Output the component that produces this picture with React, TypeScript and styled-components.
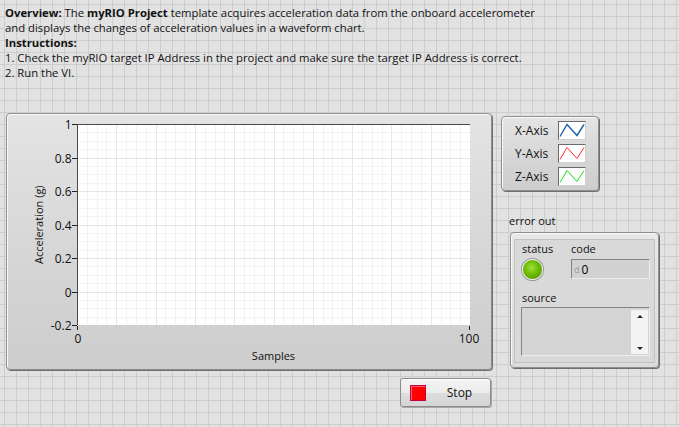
import React from "react";
import styled, { createGlobalStyle } from "styled-components";

const Global = createGlobalStyle`
  html, body { margin: 0; padding: 0; }
  body {
    width: 679px;
    height: 427px;
    overflow: hidden;
    font-family: "Open Sans", "Noto Sans", sans-serif;
    font-size: 11px;
    color: #111;
    background-color: #e2e2e2;
    background-image:
      linear-gradient(to right, #cdcdcd 1px, transparent 1px),
      linear-gradient(to bottom, #cdcdcd 1px, transparent 1px);
    background-size: 12px 12px;
    background-position: 4px 4px;
  }
`;

const Page = styled.div`
  box-sizing: border-box;
  width: 679px;
  height: 427px;
  padding: 5px 0 0 5px;
  display: flex;
  flex-direction: column;
`;

const Intro = styled.div`
  font-size: 11.3px;
  line-height: 15px;
  white-space: nowrap;
  b { font-weight: 700; }
`;

const Line = styled.div``;

const MainRow = styled.div`
  display: flex;
  margin-top: 33px;
`;

const LeftCol = styled.div`
  display: flex;
  flex-direction: column;
  margin-left: 1px;
`;

const Panel = styled.div`
  box-sizing: border-box;
  border: 1px solid #8e8e8e;
  border-radius: 4px;
  background: linear-gradient(to bottom, #e4e4e4 0%, #d6d6d6 55%, #cdcdcd 100%);
  box-shadow: inset 1px 1px 0 #fafafa, 1px 1px 0 #6e6e6e;
`;

const ChartPanel = styled(Panel)`
  width: 486px;
  height: 257px;
  display: flex;
  align-items: flex-start;
`;

const YTitle = styled.div`
  margin: 10px 0 0 25px;
  width: 14px;
  height: 201px;
  display: flex;
  align-items: center;
  justify-content: center;
  writing-mode: vertical-rl;
  transform: rotate(180deg);
  line-height: 14px;
  white-space: nowrap;
`;

const ChartCol = styled.div`
  display: flex;
  flex-direction: column;
`;

const XTitle = styled.div`
  margin-left: 31px;
  width: 393px;
  text-align: center;
  line-height: 15px;
`;

const StopRow = styled.div`
  display: flex;
  justify-content: flex-end;
  margin-top: 8px;
  margin-right: 1px;
`;

const StopButton = styled.button`
  box-sizing: border-box;
  width: 91px;
  height: 29px;
  padding: 0 0 0 9px;
  display: flex;
  align-items: center;
  border: 1px solid #8a8a8a;
  border-radius: 3px;
  background: linear-gradient(to bottom, #f4f4f4 0%, #ececec 50%, #dcdcdc 51%, #d6d6d6 100%);
  box-shadow: inset 0 1px 0 #ffffff, 1px 1px 0 #a8a8a8;
  font-family: "Open Sans", sans-serif;
  font-size: 12px;
  color: #111;
`;

const RedLamp = styled.span`
  box-sizing: border-box;
  width: 16px;
  height: 16px;
  background: #ff0000;
  border: 1px solid #c8003a;
  box-shadow: inset 1px 1px 0 #ff5a78;
`;

const StopLabel = styled.span`
  flex: 1;
  text-align: center;
  padding-left: 3px;
`;

const RightCol = styled.div`
  display: flex;
  flex-direction: column;
  margin-left: 9px;
`;

const LegendPanel = styled(Panel)`
  margin-top: 3px;
  width: 98px;
  height: 75px;
  padding: 4px 12px 0 13px;
  display: flex;
  flex-direction: column;
  gap: 4px;
`;

const LegendRow = styled.div`
  height: 19px;
  display: flex;
  align-items: center;
  justify-content: space-between;
  font-size: 12px;
`;

const Swatch = styled.svg`
  box-sizing: border-box;
  width: 28px;
  height: 19px;
  background: #fff;
  border-top: 1px solid #6a6a6a;
  border-left: 1px solid #6a6a6a;
  border-right: 1px solid #d0d0d0;
  border-bottom: 1px solid #d0d0d0;
`;

const ErrorLabel = styled.div`
  margin: 22px 0 0 8px;
  line-height: 15px;
`;

const Cluster = styled(Panel)`
  margin: 4px 0 0 9px;
  width: 149px;
  height: 136px;
  padding: 6px 3px 0 3px;
  background: linear-gradient(to bottom, #e8e8e8 0%, #dcdcdc 100%);
`;

const ClusterInner = styled.div`
  box-sizing: border-box;
  height: 124px;
  border: 1px solid #c2c2c2;
  background: #d9d9d9;
  padding: 1px 0 0 7px;
  display: flex;
  flex-direction: column;
`;

const TopFields = styled.div`
  display: flex;
`;

const Field = styled.div<{ $w?: number }>`
  display: flex;
  flex-direction: column;
  width: ${(p) => (p.$w ? `${p.$w}px` : "auto")};
`;

const FieldLabel = styled.div`
  line-height: 15px;
`;

const Led = styled.div`
  box-sizing: border-box;
  margin-top: 3px;
  width: 21px;
  height: 21px;
  border-radius: 50%;
  border: 1px solid #f2f2f2;
  background: radial-gradient(circle at 45% 40%, #a2e040 0%, #6cbc00 45%, #4e9a00 85%, #3a7a00 100%);
  box-shadow: 0 0 0 1px #9a9a9a;
`;

const CodeBox = styled.div`
  box-sizing: border-box;
  margin-top: 3px;
  width: 79px;
  height: 20px;
  background: #d2d2d2;
  border-top: 1px solid #858585;
  border-left: 1px solid #858585;
  border-right: 1px solid #ececec;
  border-bottom: 1px solid #ececec;
  display: flex;
  align-items: center;
  padding-left: 2px;
  font-size: 12px;
  color: #000;
`;

const Radix = styled.span`
  font-size: 9px;
  color: #9a9a9a;
  margin-right: 2px;
`;

const SourceLabel = styled(FieldLabel)`
  margin-top: 10px;
`;

const SourceBox = styled.div`
  box-sizing: border-box;
  margin: 2px 0 0 -1px;
  width: 129px;
  height: 49px;
  background: #d4d4d4;
  border-top: 1px solid #858585;
  border-left: 1px solid #858585;
  border-right: 1px solid #ececec;
  border-bottom: 1px solid #ececec;
  display: flex;
  justify-content: flex-end;
  padding: 2px 1px 1px 0;
`;

const ScrollBar = styled.div`
  width: 17px;
  background: #f3f3f3;
  display: flex;
  flex-direction: column;
  justify-content: space-between;
  align-items: center;
  padding: 5px 0 4px;
  box-sizing: border-box;
`;

const Arrow = styled.span<{ $down?: boolean }>`
  width: 0;
  height: 0;
  border-left: 3px solid transparent;
  border-right: 3px solid transparent;
  ${(p) => (p.$down ? "border-top: 3px solid #222;" : "border-bottom: 3px solid #222;")}
`;

const TickText = styled.text`
  font-family: "Open Sans", sans-serif;
  font-size: 12px;
  fill: #111;
`;

const PX = 31;
const PY = 10;
const PW = 393;
const PH = 201;

function Chart() {
  const grid: React.ReactNode[] = [];
  for (let i = 1; i < 40; i++) {
    const x = Math.round(PX + (PW * i) / 40) + 0.5;
    grid.push(
      <line key={`v${i}`} x1={x} x2={x} y1={PY} y2={PY + PH} stroke={i % 4 === 0 ? "#e6e6e6" : "#f3f3f3"} strokeWidth={1} />
    );
  }
  for (let j = 1; j < 24; j++) {
    const y = Math.round(PY + (PH * j) / 24) + 0.5;
    grid.push(
      <line key={`h${j}`} x1={PX} x2={PX + PW} y1={y} y2={y} stroke={j % 4 === 0 ? "#e6e6e6" : "#f3f3f3"} strokeWidth={1} />
    );
  }
  const yTicks = ["1", "0.8", "0.6", "0.4", "0.2", "0", "-0.2"];
  return (
    <svg width={435} height={234} style={{ display: "block" }}>
      <rect x={PX} y={PY} width={PW} height={PH} fill="#ffffff" />
      {grid}
      <line x1={PX} x2={PX + PW} y1={PY + 0.5} y2={PY + 0.5} stroke="#4a4a4a" />
      <line x1={PX + 0.5} x2={PX + 0.5} y1={PY} y2={PY + PH} stroke="#4a4a4a" />
      {yTicks.map((t, i) => {
        const y = Math.round(PY + i * 33.5) + 0.5;
        return (
          <g key={t}>
            <line x1={26} x2={PX} y1={y} y2={y} stroke="#222" />
            <TickText x={25.5} y={y} dy="0.36em" textAnchor="end">
              {t}
            </TickText>
          </g>
        );
      })}
      <line x1={PX + 0.5} x2={PX + 0.5} y1={PY + PH + 1} y2={PY + PH + 5} stroke="#222" />
      <line x1={PX + PW - 0.5} x2={PX + PW - 0.5} y1={PY + PH + 1} y2={PY + PH + 5} stroke="#222" />
      <TickText x={PX + 1} y={229} textAnchor="middle">
        0
      </TickText>
      <TickText x={PX + PW - 1} y={229} textAnchor="middle">
        100
      </TickText>
    </svg>
  );
}

function ZigZag({ color, width }: { color: string; width: number }) {
  return (
    <Swatch viewBox="0 0 26 17">
      <polyline points="1,14.5 8,2.5 18,13.5 25,2.5" fill="none" stroke={color} strokeWidth={width} />
    </Swatch>
  );
}

export default function App() {
  return (
    <Page>
      <Global />
      <Intro>
        <Line>
          <b>Overview:</b> The <b>myRIO Project</b> template acquires acceleration data from the onboard accelerometer
        </Line>
        <Line>and displays the changes of acceleration values in a waveform chart.</Line>
        <Line>
          <b>Instructions:</b>
        </Line>
        <Line>1. Check the myRIO target IP Address in the project and make sure the target IP Address is correct.</Line>
        <Line>2. Run the VI.</Line>
      </Intro>
      <MainRow>
        <LeftCol>
          <ChartPanel>
            <YTitle>Acceleration (g)</YTitle>
            <ChartCol>
              <Chart />
              <XTitle>Samples</XTitle>
            </ChartCol>
          </ChartPanel>
          <StopRow>
            <StopButton>
              <RedLamp />
              <StopLabel>Stop</StopLabel>
            </StopButton>
          </StopRow>
        </LeftCol>
        <RightCol>
          <LegendPanel>
            <LegendRow>
              X-Axis <ZigZag color="#1f62a8" width={1.4} />
            </LegendRow>
            <LegendRow>
              Y-Axis <ZigZag color="#ff2a2a" width={1} />
            </LegendRow>
            <LegendRow>
              Z-Axis <ZigZag color="#16e016" width={1} />
            </LegendRow>
          </LegendPanel>
          <ErrorLabel>error out</ErrorLabel>
          <Cluster>
            <ClusterInner>
              <TopFields>
                <Field $w={49}>
                  <FieldLabel>status</FieldLabel>
                  <Led />
                </Field>
                <Field>
                  <FieldLabel>code</FieldLabel>
                  <CodeBox>
                    <Radix>d</Radix>0
                  </CodeBox>
                </Field>
              </TopFields>
              <SourceLabel>source</SourceLabel>
              <SourceBox>
                <ScrollBar>
                  <Arrow />
                  <Arrow $down />
                </ScrollBar>
              </SourceBox>
            </ClusterInner>
          </Cluster>
        </RightCol>
      </MainRow>
    </Page>
  );
}
